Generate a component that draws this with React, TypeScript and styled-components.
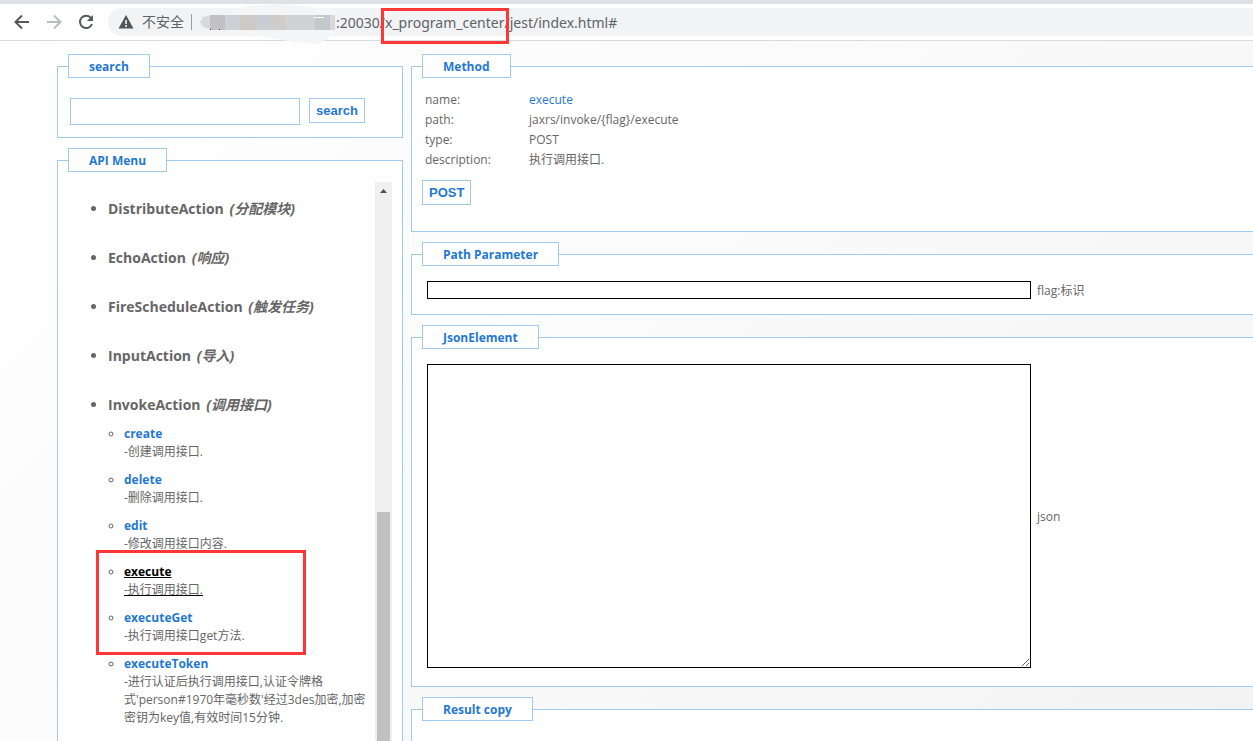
import React from "react";
import styled, { createGlobalStyle } from "styled-components";

const BLUE = "#1f78d1";
const LINE = "#a0caf0";
const sans = `"Open Sans", "Noto Sans CJK SC", sans-serif`;

const Global = createGlobalStyle`
  * { box-sizing: border-box; }
  html, body { margin: 0; height: 100%; }
  body { font: 12px/18px ${sans}; color: #666; overflow: hidden; }
`;

const Shell = styled.div`
  display: flex;
  flex-direction: column;
  height: 100vh;
  overflow: hidden;
  position: relative;
`;

const Browser = styled.header`
  position: relative;
  z-index: 1;
  display: flex;
  align-items: center;
  height: 41px;
  flex: none;
  padding-left: 12px;
  border-top: 4px solid #dee1e6;
  border-bottom: 1px solid #d8dadd;
  background: #fff;
`;

const NavButton = styled.button<{ $dim?: boolean }>`
  display: flex;
  justify-content: center;
  align-items: center;
  width: 20px;
  height: 28px;
  margin-right: 12px;
  padding: 0;
  border: 0;
  background: none;
  color: ${(p) => (p.$dim ? "#bbbcbe" : "#55585c")};
`;

const AddressBar = styled.div`
  display: flex;
  align-items: center;
  flex: 1;
  height: 28px;
  padding-left: 10px;
  border-radius: 14px 0 0 14px;
  background: #f1f3f4;
  color: #5f6368;
  font-size: 14px;
`;

const Insecure = styled.span`
  margin-left: 8px;
  padding-right: 7px;
  line-height: 16px;
  border-right: 1px solid #9a9da1;
`;

const HostSmudge = styled.svg`
  flex: none;
  width: 138px;
  height: 28px;
  margin-left: 6px;
  overflow: visible;
`;

const Address = styled.input`
  flex: 1;
  min-width: 0;
  height: 28px;
  padding: 0;
  border: 0;
  outline: 0;
  background: none;
  color: #5f6368;
  font: 14px "Noto Sans", sans-serif;
`;

const Page = styled.main`
  display: flex;
  flex: 1;
  min-height: 0;
  gap: 8px;
  padding: 13px 0 0 57px;
  background: linear-gradient(135deg, #fff 0%, #fafafa 50%, #f3f3f3 100%);
`;

const Column = styled.div<{ $side?: boolean }>`
  display: flex;
  flex-direction: column;
  gap: 10px;
  min-width: 0;
  flex: ${(p) => (p.$side ? "0 0 346px" : "1")};
`;

const Panel = styled.fieldset<{ $open?: boolean; $bottom?: number }>`
  flex: none;
  min-width: 0;
  margin: 0;
  padding: 0 10px ${(p) => p.$bottom ?? 0}px;
  border: 1px solid ${LINE};
  border-right-width: ${(p) => (p.$open ? 0 : 1)}px;
  background: #fff;
`;

const FillPanel = styled(Panel)`
  height: 700px;
  border-bottom: 0;
`;

const Legend = styled.legend`
  height: 24px;
  padding: 1px 20px 0;
  border: 1px solid ${LINE};
  background: #fff;
  color: ${BLUE};
  font-size: 12px;
  font-weight: 700;
  line-height: 21px;
`;

const SearchForm = styled.form`
  display: flex;
  align-items: flex-start;
  gap: 9px;
  padding: 20px 0 12px 2px;
`;

const SearchInput = styled.input`
  width: 230px;
  height: 27px;
  border: 1px solid ${LINE};
  background: #fff;
`;

const Button = styled.button`
  height: 25px;
  padding: 0 6px;
  border: 1px solid ${LINE};
  background: #fff;
  color: ${BLUE};
  font: 700 13px "Liberation Sans", sans-serif;
`;

const MenuBody = styled.div`
  display: flex;
  height: 600px;
  margin-top: 10px;
`;

const ActionList = styled.ul`
  flex: 1;
  min-width: 0;
  margin: 0;
  padding: 17px 4px 0 40px;
  list-style: disc;
`;

const Action = styled.li`
  margin-bottom: 29px;
  font-size: 14px;
  line-height: 20px;
`;

const ActionName = styled.strong`
  font-weight: 700;
  em { margin-left: 2px; }
`;

const MethodList = styled.ul`
  margin: 10px 0 0;
  padding: 0 0 0 16px;
  list-style: circle;
  font-size: 12px;
  line-height: 18px;
`;

const Method = styled.li`
  margin-bottom: 10px;
`;

const MethodLink = styled.a<{ $current?: boolean }>`
  display: block;
  color: ${(p) => (p.$current ? "#000" : BLUE)};
  text-decoration: ${(p) => (p.$current ? "underline" : "none")};
`;

const Note = styled.span`
  display: block;
  color: #666;
`;

const ScrollTrack = styled.div`
  display: flex;
  flex-direction: column;
  align-items: center;
  flex: none;
  width: 17px;
  background: #f0f0f0;
`;

const ScrollArrow = styled.svg`
  width: 7px;
  height: 4px;
  margin: 7px 0 319px;
`;

const ScrollThumb = styled.div`
  flex: 1;
  width: 13px;
  background: #c1c1c1;
`;

const Details = styled.table`
  margin: 12px 0 10px;
  border-collapse: collapse;
  th, td {
    height: 20px;
    padding: 0 0 0 3px;
    font-weight: 400;
    text-align: left;
    line-height: 20px;
  }
  th { width: 104px; }
`;

const DetailLink = styled.a`
  color: ${BLUE};
  text-decoration: none;
`;

const Field = styled.label`
  display: flex;
  align-items: center;
  gap: 6px;
  padding: 15px 0 0 5px;
`;

const FieldNote = styled.span`
  padding-top: 2px;
  line-height: 16px;
`;

const FieldInput = styled.input`
  flex: 0 1 604px;
  min-width: 0;
  height: 18px;
  border: 1px solid #000;
  background: #fff;
`;

const FieldArea = styled.textarea`
  flex: 0 1 604px;
  min-width: 0;
  height: 304px;
  border: 1px solid #000;
  background: #fff;
  resize: both;
`;

const Highlight = styled.div<{ $x: number; $y: number; $w: number; $h: number }>`
  position: absolute;
  z-index: 2;
  left: ${(p) => p.$x}px;
  top: ${(p) => p.$y}px;
  width: ${(p) => p.$w}px;
  height: ${(p) => p.$h}px;
  border: 3px solid #fb3737;
  pointer-events: none;
`;

const actions = [
  ["DistributeAction", "分配模块"],
  ["EchoAction", "响应"],
  ["FireScheduleAction", "触发任务"],
  ["InputAction", "导入"],
];

const methods = [
  ["create", "-创建调用接口."],
  ["delete", "-删除调用接口."],
  ["edit", "-修改调用接口内容."],
  ["execute", "-执行调用接口."],
  ["executeGet", "-执行调用接口get方法."],
  ["executeToken", "-进行认证后执行调用接口,认证令牌格式'person#1970年毫秒数'经过3des加密,加密密钥为key值,有效时间15分钟."],
];

const Arrow = ({ flip }: { flip?: boolean }) => (
  <svg width="16" height="16" viewBox="0 0 16 16" fill="none" stroke="currentColor" strokeWidth="2">
    <path d={flip ? "M1 8H14M8 1.5L14.5 8L8 14.5" : "M15 8H2M8 1.5L1.5 8L8 14.5"} />
  </svg>
);

export default function App() {
  return (
    <Shell>
      <Global />
      <Browser>
        <NavButton aria-label="Back"><Arrow /></NavButton>
        <NavButton aria-label="Forward" $dim><Arrow flip /></NavButton>
        <NavButton aria-label="Reload">
          <svg width="16" height="16" viewBox="0 0 16 16" fill="none" stroke="currentColor" strokeWidth="2">
            <path d="M13.2 4.2A6.2 6.2 0 1 0 14 10" />
            <path d="M15 1V7H9Z" fill="currentColor" stroke="none" />
          </svg>
        </NavButton>
        <AddressBar>
          <svg width="16" height="14" viewBox="0 0 16 14">
            <path d="M8 0L15.5 13.5H.5Z" fill="#505357" />
            <path d="M8 5V9M8 10V12" stroke="#f1f3f4" strokeWidth="1.6" />
          </svg>
          <Insecure>不安全</Insecure>
          <HostSmudge viewBox="0 0 138 28" aria-hidden="true">
            <path d="M28 8L42 0L60 -3L90 -4L112 -1L138 2V24L128 32L118 36L90 33L60 28L28 22Z" fill="#f3f5f7" />
            <path d="M14 7H137V22H14L5 19L2 14L5 9Z" fill="#d8d9da" />
            <path d="M12 7H27V22H12Z" fill="#c1c0c2" />
            <path d="M27 7H42V22H27Z" fill="#cdd0d5" />
            <path d="M42 7H57V22H42Z" fill="#cdc9c6" />
            <path d="M57 7H72V22H57Z" fill="#c9ced2" />
            <path d="M72 7H87V22H72Z" fill="#cfccca" />
            <path d="M87 7H117V22H87Z" fill="#d0d3d5" />
            <path d="M117 7H132V22H117Z" fill="#c3c8ce" />
            <path d="M116 9.500H126" stroke="#fff" />
            <path d="M12 21.500H13M21 21.500H22" stroke="#5a2b30" />
          </HostSmudge>
          <Address aria-label="Address" defaultValue=":20030/x_program_center/jest/index.html#" />
        </AddressBar>
      </Browser>
      <Page>
        <Column $side>
          <Panel>
            <Legend>search</Legend>
            <SearchForm onSubmit={(e) => e.preventDefault()}>
              <SearchInput aria-label="search" />
              <Button>search</Button>
            </SearchForm>
          </Panel>
          <FillPanel>
            <Legend>API Menu</Legend>
            <MenuBody>
              <ActionList>
                {actions.map(([name, note]) => (
                  <Action key={name}>
                    <ActionName>{name} <em>({note})</em></ActionName>
                  </Action>
                ))}
                <Action>
                  <ActionName>InvokeAction <em>(调用接口)</em></ActionName>
                  <MethodList>
                    {methods.map(([name, note]) => (
                      <Method key={name}>
                        <MethodLink href="#" $current={name === "execute"}>
                          <strong>{name}</strong>
                          <Note>{note}</Note>
                        </MethodLink>
                      </Method>
                    ))}
                  </MethodList>
                </Action>
              </ActionList>
              <ScrollTrack>
                <ScrollArrow viewBox="0 0 7 4"><path d="M0 4L3.500 0L7 4Z" fill="#505050" /></ScrollArrow>
                <ScrollThumb />
              </ScrollTrack>
            </MenuBody>
          </FillPanel>
        </Column>
        <Column>
          <Panel $open $bottom={26}>
            <Legend>Method</Legend>
            <Details>
              <tbody>
                <tr><th scope="row">name:</th><td><DetailLink href="#">execute</DetailLink></td></tr>
                <tr><th scope="row">path:</th><td>jaxrs/invoke/{"{flag}"}/execute</td></tr>
                <tr><th scope="row">type:</th><td>POST</td></tr>
                <tr><th scope="row">description:</th><td>执行调用接口.</td></tr>
              </tbody>
            </Details>
            <Button>POST</Button>
          </Panel>
          <Panel $open $bottom={15}>
            <Legend>Path Parameter</Legend>
            <Field><FieldInput /><FieldNote>flag:标识</FieldNote></Field>
          </Panel>
          <Panel $open $bottom={18}>
            <Legend>JsonElement</Legend>
            <Field><FieldArea /><FieldNote>json</FieldNote></Field>
          </Panel>
          <FillPanel $open>
            <Legend>Result copy</Legend>
          </FillPanel>
        </Column>
      </Page>
      <Highlight $x={381} $y={8} $w={128} $h={36} />
      <Highlight $x={96} $y={550} $w={210} $h={105} />
    </Shell>
  );
}
